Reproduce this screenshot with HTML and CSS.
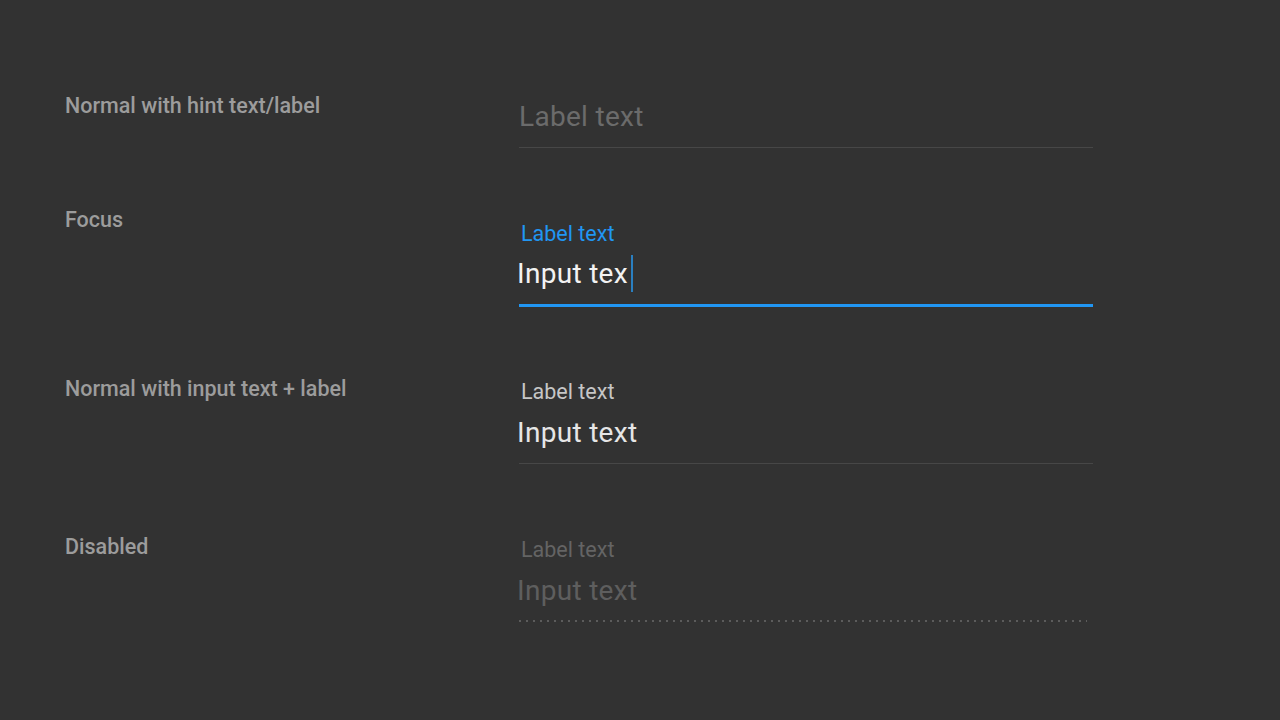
FILE: index.html
```html
<!DOCTYPE html>
<html>
<head>
<meta charset="utf-8">
<link rel="stylesheet" href="styles.css">
</head>
<body>
<main class="page">
  <section class="row row-1">
    <div class="state">Normal with hint text/label</div>
    <div class="field field-hint">
      <div class="hint">Label text</div>
    </div>
  </section>
  <section class="row row-2">
    <div class="state">Focus</div>
    <div class="field field-focus">
      <div class="label label-focus">Label text</div>
      <div class="input input-focus">Input tex<span class="cursor"></span></div>
    </div>
  </section>
  <section class="row row-3">
    <div class="state">Normal with input text + label</div>
    <div class="field field-filled">
      <div class="label label-filled">Label text</div>
      <div class="input input-filled">Input text</div>
    </div>
  </section>
  <section class="row row-4">
    <div class="state">Disabled</div>
    <div class="field field-disabled">
      <div class="label label-disabled">Label text</div>
      <div class="input input-disabled">Input text</div>
    </div>
  </section>
</main>
</body>
</html>
```
FILE: styles.css
```css
html, body {
  margin: 0;
  padding: 0;
  background: #323232;
}
body {
  width: 1280px;
  height: 720px;
  overflow: hidden;
  font-family: Roboto, "Liberation Sans", sans-serif;
}
.page {
  padding: 94px 0 0 65px;
  display: flex;
  flex-direction: column;
}
.row {
  display: flex;
  align-items: flex-start;
}
.row-1 { height: 114px; }
.row-2 { height: 169px; }
.row-3 { height: 158px; }
.row-4 { height: 120px; }

.state {
  width: 454px;
  flex: none;
  font-size: 21.5px;
  line-height: 24px;
  font-weight: 500;
  color: #9c9c9c;
}
.field {
  width: 574px;
  display: flex;
  flex-direction: column;
}
.hint {
  font-size: 28px;
  line-height: 32px;
  letter-spacing: 0.3px;
  color: #6b6b6b;
}
.label {
  font-size: 21.5px;
  line-height: 24px;
  padding-left: 2px;
}
.input {
  font-size: 28px;
  line-height: 32px;
  letter-spacing: 0.3px;
  margin-left: -2px;
}
.field-hint {
  padding-top: 7px;
  padding-bottom: 14px;
  border-bottom: 1px solid #474747;
}
.field-focus {
  padding-top: 14px;
  padding-bottom: 14px;
  border-bottom: 3px solid #2196f3;
}
.label-focus { color: #2196f3; }
.input-focus {
  margin-top: 12px;
  height: 32px;
  color: #f2f2f2;
  display: flex;
  align-items: center;
}
.cursor {
  display: inline-block;
  flex: none;
  width: 2px;
  height: 37px;
  margin-left: 3px;
  margin-top: -2px;
  background: #2a7fc0;
}
.field-filled {
  padding-top: 3px;
  padding-bottom: 14px;
  border-bottom: 1px solid #474747;
}
.label-filled { color: #c6c6c6; }
.input-filled {
  margin-top: 13px;
  color: #e6e6e6;
}
.field-disabled {
  padding-top: 3px;
  padding-bottom: 13px;
  width: 568px;
  background-image: linear-gradient(to right, #5c5c5c 0, #5c5c5c 2px, transparent 2px, transparent 7px);
  background-size: 7px 2px;
  background-repeat: repeat-x;
  background-position: 0 100%;
}
.label-disabled { color: #646464; }
.input-disabled {
  margin-top: 13px;
  color: #5e5e5e;
  padding-bottom: 2px;
}
```
